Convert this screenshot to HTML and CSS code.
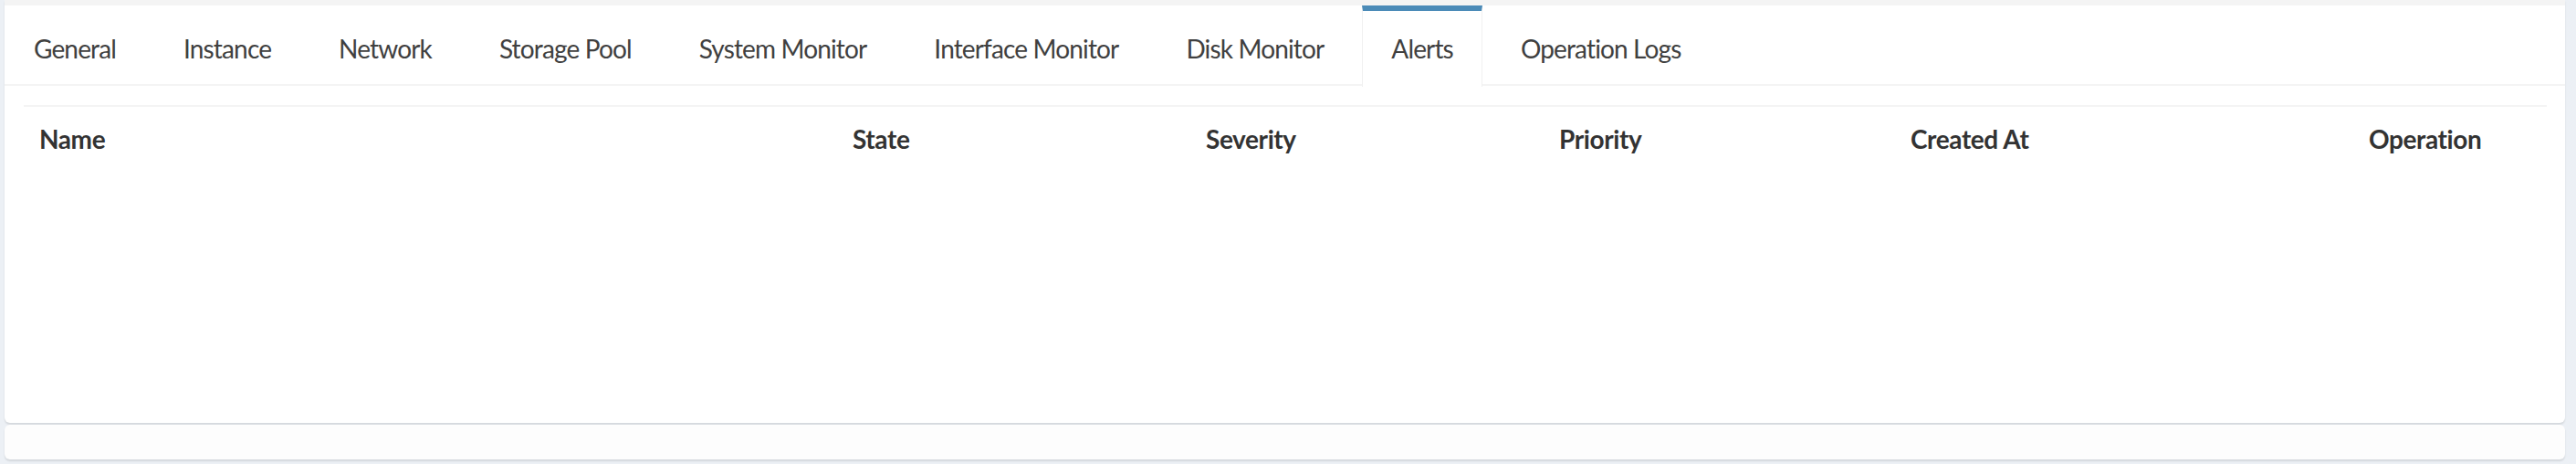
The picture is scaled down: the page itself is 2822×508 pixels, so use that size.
FILE: index.html
```html
<!DOCTYPE html>
<html lang="en">
<head>
<meta charset="utf-8">
<title>Alerts</title>
<link rel="stylesheet" href="styles.css">
</head>
<body>
<div class="page">
  <div class="card tabs-card">
    <ul class="nav-tabs">
      <li class="tab"><a>General</a></li>
      <li class="tab"><a>Instance</a></li>
      <li class="tab"><a>Network</a></li>
      <li class="tab"><a>Storage Pool</a></li>
      <li class="tab"><a>System Monitor</a></li>
      <li class="tab"><a>Interface Monitor</a></li>
      <li class="tab"><a>Disk Monitor</a></li>
      <li class="tab active"><a>Alerts</a></li>
      <li class="tab"><a>Operation Logs</a></li>
    </ul>
    <div class="tab-content">
      <table class="grid">
        <colgroup>
          <col class="c-name">
          <col class="c-state">
          <col class="c-severity">
          <col class="c-priority">
          <col class="c-created">
          <col class="c-op">
        </colgroup>
        <thead>
          <tr>
            <th>Name</th>
            <th>State</th>
            <th>Severity</th>
            <th>Priority</th>
            <th>Created At</th>
            <th>Operation</th>
          </tr>
        </thead>
        <tbody></tbody>
      </table>
    </div>
  </div>
  <div class="card footer-card"></div>
</div>
</body>
</html>
```

FILE: styles.css
```css
* { box-sizing: border-box; }

html, body {
  margin: 0;
  padding: 0;
  background: #ecf0f5;
  font-family: "Lato", "Roboto", "Liberation Sans", sans-serif;
  color: #444;
}

.page {
  width: 2822px;
  height: 508px;
  padding: 0 12px 5px 5px;
  display: flex;
  flex-direction: column;
  gap: 2px;
}

.card {
  background: #fff;
  border-radius: 0 0 6px 6px;
  box-shadow: 0 2px 2px rgba(0, 0, 0, 0.1);
}

.tabs-card {
  height: 463px;
  border-top: 6px solid #f4f4f4;
  display: flex;
  flex-direction: column;
}

.footer-card {
  height: 38px;
  background: #fdfdfd;
  border-radius: 6px;
}

.nav-tabs {
  list-style: none;
  margin: 0;
  padding: 0;
  display: flex;
  height: 88px;
  border-bottom: 2px solid #f4f4f4;
}

.tab {
  margin-right: 10px;
  height: 89px;
}

.tab a {
  display: block;
  height: 100%;
  padding: 1px 31px 0;
  border-top: 6px solid transparent;
  border-left: 1px solid transparent;
  border-right: 1px solid transparent;
  font-size: 28px;
  letter-spacing: -0.85px;
  line-height: 80px;
  color: #404040;
}

.tab.active a {
  border-top-color: #4b8bb8;
  border-left-color: #f0f0f0;
  border-right-color: #f0f0f0;
  background: #fff;
}

.tab-content {
  flex: 1;
  padding: 21px;
}

.grid {
  width: 2764px;
  border-collapse: collapse;
  table-layout: fixed;
  border-top: 2px solid #f4f4f4;
}

.c-name { width: 891px; }
.c-state { width: 387px; }
.c-severity { width: 387px; }
.c-priority { width: 385px; }
.c-created { width: 502px; }
.c-op { width: 212px; }

.grid th {
  text-align: left;
  padding: 17px;
  font-size: 28px;
  letter-spacing: -0.4px;
  line-height: 36px;
  font-weight: 700;
  color: #333;
}
```
